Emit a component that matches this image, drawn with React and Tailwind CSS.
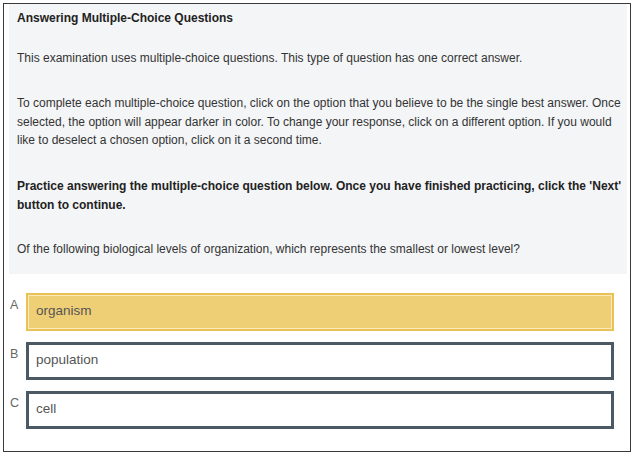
export default function App() {
  const options = [
    { l: "A", t: "organism", sel: true },
    { l: "B", t: "population" },
    { l: "C", t: "cell" },
  ];
  return (
    <div className="w-[634px] h-[454px] bg-white pt-[3px] pl-[3px]" style={{ fontFamily: '"Liberation Sans", Arial, sans-serif' }}>
      <div className="w-[628px] h-[449px] border border-[#3a3a3a] bg-white flex flex-col">
        <div className="ml-[5px] w-[618px] bg-[#f4f5f7] pl-[8px] pr-[4px] pt-[5px] pb-[15px] text-[12px] leading-[18.5px] text-[#333]">
          <p className="font-bold text-[#222]">Answering Multiple-Choice Questions</p>
          <p className="mt-[21.5px]">This examination uses multiple-choice questions. This type of question has one correct answer.</p>
          <p className="mt-[26.5px]">To complete each multiple-choice question, click on the option that you believe to be the single best answer. Once selected, the option will appear darker in color. To change your response, click on a different option. If you would like to deselect a chosen option, click on it a second time.</p>
          <p className="mt-[27.5px] font-bold text-[#222]">Practice answering the multiple-choice question below. Once you have finished practicing, click the 'Next' button to continue.</p>
          <p className="mt-[26px]">Of the following biological levels of organization, which represents the smallest or lowest level?</p>
        </div>
        <div className="mt-[19px] flex flex-col gap-[11px]">
          {options.map((o) => (
            <div key={o.l} className="flex items-start">
              <div className="w-[22px] pl-[6px] pt-[3px] text-[12.5px] leading-[18px] text-[#666]">{o.l}</div>
              <div
                className={
                  o.sel
                    ? "w-[588px] h-[38px] border-2 border-[#eac157] bg-[#efcf76] shadow-[inset_0_0_0_1px_#fbebbb] flex items-center pl-[8px] text-[13.5px] text-[#555]"
                    : "w-[588px] h-[38px] border-[3px] border-[#4b5965] bg-white flex items-center pl-[7px] text-[13.5px] text-[#555]"
                }
              >
                {o.t}
              </div>
            </div>
          ))}
        </div>
      </div>
    </div>
  );
}
